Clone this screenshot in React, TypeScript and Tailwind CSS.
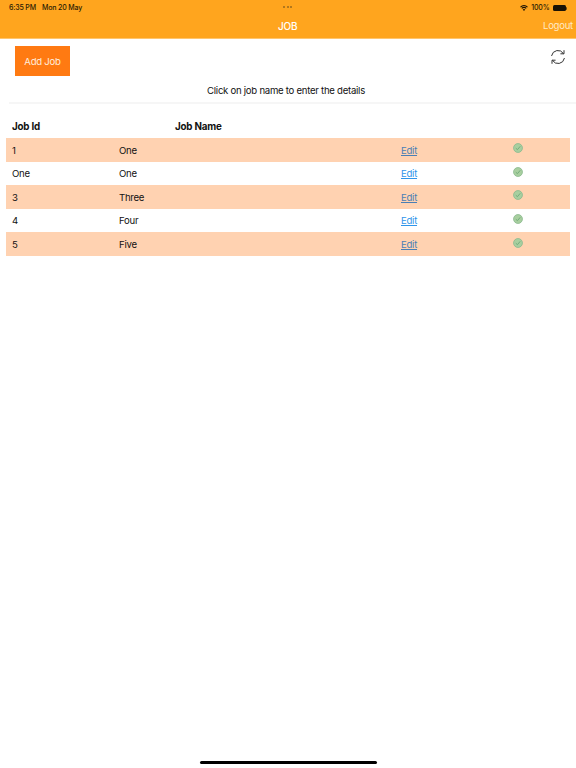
import { FC } from 'react'

const jobs = [
  { id: '1', name: 'One' },
  { id: 'One', name: 'One' },
  { id: '3', name: 'Three' },
  { id: '4', name: 'Four' },
  { id: '5', name: 'Five' }
]

const WifiIcon: FC = () => (
  <svg width="8" height="6" viewBox="0 0 18 14" fill="#1a1205">
    <path d="M9 14 6 10.6a4.4 4.4 0 0 1 6 0L9 14ZM4.6 9 2.8 7a9 9 0 0 1 12.4 0l-1.8 2a6.4 6.4 0 0 0-8.8 0ZM1.5 5.6 0 3.8a13.2 13.2 0 0 1 18 0l-1.5 1.8a11 11 0 0 0-15 0Z" />
  </svg>
)

const BatteryIcon: FC = () => (
  <div className="flex items-center">
    <div className="h-[6px] w-[13px] rounded-[1.5px] bg-[#1a1205]" />
    <div className="ml-[0.5px] h-[3px] w-[1px] rounded-r-sm bg-[#6b4a12]" />
  </div>
)

const RefreshIcon: FC = () => (
  <svg width="16" height="16" viewBox="0 0 16 16" fill="none" stroke="#333" strokeWidth="1" strokeLinecap="round" strokeLinejoin="round">
    <path d="M1.6 6.6A6.5 6.5 0 0 1 13.4 4.4" />
    <path d="M14 1.6v3.2h-3.2" />
    <path d="M14.4 9.4A6.5 6.5 0 0 1 2.6 11.6" />
    <path d="M2 14.4v-3.2h3.2" />
  </svg>
)

const CheckIcon: FC = () => (
  <svg width="10" height="10" viewBox="0 0 18 18">
    <circle cx="9" cy="9" r="8" fill="#a8cf9f" stroke="#8dbb90" strokeWidth="1.5" />
    <path d="M5 9.4 8 12l5-6" fill="none" stroke="#6aa575" strokeWidth="1.5" />
  </svg>
)

const App: FC = () => {
  return (
    <div className="relative flex h-[768px] w-[576px] flex-col overflow-hidden bg-white font-['Inter',sans-serif] text-[9.6px] tracking-[-0.27px] text-[#111]">
      <header className="relative h-[39px] shrink-0 border-b border-[#ffc56e] bg-[#ffa51e]">
        <div className="flex h-[14px] items-center justify-between px-[9px] pt-[2px] text-[7px] font-medium tracking-[-0.15px] text-[#2a1c05]">
          <div className="flex gap-[6px]">
            <span>6:35 PM</span>
            <span>Mon 20 May</span>
          </div>
          <div className="flex items-center gap-[3px]">
            <WifiIcon />
            <span>100%</span>
            <BatteryIcon />
          </div>
        </div>
        <div className="absolute left-[283px] top-[6px] flex gap-[1.5px]">
          <span className="h-[2px] w-[2px] rounded-full bg-[#9a6a1c]" />
          <span className="h-[2px] w-[2px] rounded-full bg-[#9a6a1c]" />
          <span className="h-[2px] w-[2px] rounded-full bg-[#9a6a1c]" />
        </div>
        <div className="mt-[5px] flex items-center justify-between pl-[278px] pr-[3px] text-white">
          <span className="text-[10px] font-medium">JOB</span>
          <span className="text-[#ffe9c4]">Logout</span>
        </div>
      </header>

      <div className="flex items-start justify-between pl-[15px] pr-[10px] pt-[7px]">
        <button className="h-[30px] w-[55px] bg-[#ff7a12] pt-[2px] text-[#ffeede]">Add Job</button>
        <div className="pt-[3px]">
          <RefreshIcon />
        </div>
      </div>

      <p className="mt-[8px] pr-[4px] text-center leading-[13px]">Click on job name to enter the details</p>
      <div className="ml-[9px] mt-[5px] h-[2px] bg-[#f6f6f6]" />

      <div className="mt-[15px] flex h-[16px] items-center pl-[12px] text-[9.8px] font-bold tracking-[-0.2px]">
        <span className="w-[163px]">Job Id</span>
        <span>Job Name</span>
      </div>

      <div className="mx-[6px] mt-[3px]">
        {jobs.map((job, i) => (
          <div
            key={i}
            className={i % 2 === 0 ? 'flex h-[23.6px] items-center bg-[#ffd2b1] pl-[6px] pt-[2px]' : 'flex h-[23.6px] items-center bg-white pl-[6px] pt-[2px]'}
          >
            <span className="w-[107px]">{job.id}</span>
            <span className="w-[282px]">{job.name}</span>
            <span className={i % 2 === 0 ? 'w-[112px] text-[#4a7fb5] underline' : 'w-[112px] text-[#2f95ea] underline'}>Edit</span>
            <span className="-mt-[5px] flex">
              <CheckIcon />
            </span>
          </div>
        ))}
      </div>

      <div className="absolute bottom-[4px] left-[200px] h-[3px] w-[177px] rounded-full bg-black" />
    </div>
  )
}

export default App
